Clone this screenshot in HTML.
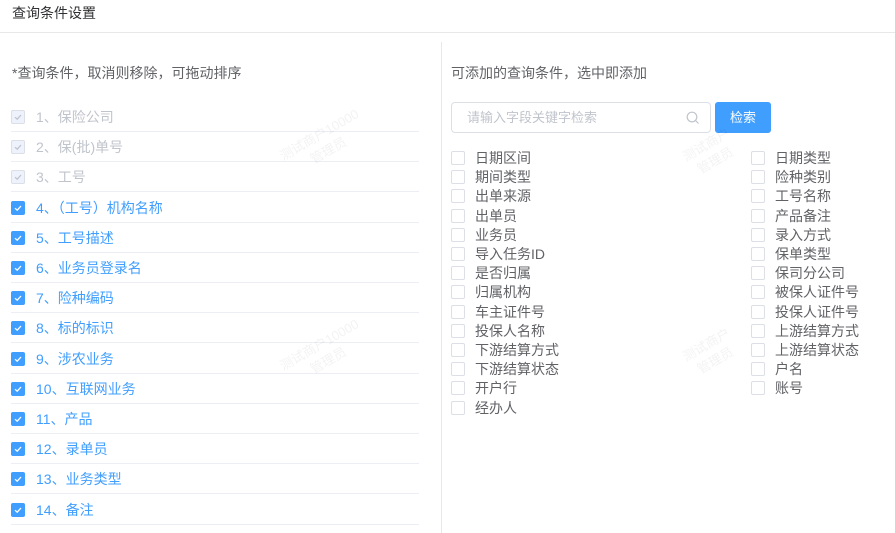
<!DOCTYPE html><html><head><meta charset="utf-8"><style>
body{margin:0;width:895px;height:533px;overflow:hidden;background:#fff;font-family:"Liberation Sans","Noto Sans CJK SC",sans-serif;position:relative}
.hd{position:absolute;left:12px;top:4px;font-size:14px;color:#303133;line-height:18px}
.hl{position:absolute;left:0;right:0;top:32px;border-top:1px solid #e8e8e8}
.vl{position:absolute;left:441px;top:42px;bottom:0;border-left:1px solid #e8e8e8}
.tip{position:absolute;font-size:14px;color:#606266;top:64px;line-height:18px}
.row{position:absolute;left:11px;width:408px;height:30px;border-bottom:1px solid #ebeef5;box-sizing:border-box;font-size:14px;line-height:30px}
.cb{position:absolute;width:14px;height:14px;border:1px solid #dcdfe6;border-radius:2px;box-sizing:border-box;background:#fff}
.row .cb{left:0;top:8px}
.row span{position:absolute;left:25px;top:0}
.dis{color:#c0c4cc}.dis .cb{background:#edf2fc}
.on{color:#409eff}.on .cb{background:#409eff;border-color:#409eff}
.cb svg{position:absolute;left:1px;top:1px}
.it{position:absolute;font-size:14px;color:#606266;line-height:19px}
.it .cb{left:0;top:2px}
.it span{position:absolute;left:24px;white-space:nowrap}
.inp{position:absolute;left:451px;top:102px;width:260px;height:31px;border:1px solid #dcdfe6;border-radius:4px;box-sizing:border-box;font-size:13px;color:#c0c4cc;line-height:29px;padding-left:15px}
.btn{position:absolute;left:715px;top:102px;width:56px;height:31px;background:#409eff;border-radius:3px;color:#fff;font-size:13px;text-align:center;line-height:31px}
.wm{position:absolute;color:rgba(0,0,0,0.05);font-size:13px;transform:rotate(-30deg);text-align:center;line-height:18px}
</style></head><body>
<div class="hd">查询条件设置</div><div class="hl"></div><div class="vl"></div>
<div class="tip" style="left:12px">*查询条件，取消则移除，可拖动排序</div>
<div class="tip" style="left:451px">可添加的查询条件，选中即添加</div>
<div id="L"></div>
<div class="inp">请输入字段关键字检索<svg style="position:absolute;right:10px;top:8px" width="14" height="14" viewBox="0 0 14 14"><circle cx="6" cy="6" r="4.8" fill="none" stroke="#c0c4cc" stroke-width="1.2"/><path d="M9.5 9.5L12.5 12.5" stroke="#c0c4cc" stroke-width="1.2"/></svg></div>
<div class="btn">检索</div>
<div id="R"></div>
<div class="wm" style="left:280px;top:125px">测试商户10000<br>管理员</div>
<div class="wm" style="left:280px;top:335px">测试商户10000<br>管理员</div>
<div class="wm" style="left:685px;top:135px">测试商户<br>管理员</div>
<div class="wm" style="left:685px;top:335px">测试商户<br>管理员</div>
<script>
var chk='<svg width="10" height="10" viewBox="0 0 10 10"><path d="M2 5.2L4.2 7.2L8 3" fill="none" stroke="COL" stroke-width="1.3"/></svg>';
var L=["保险公司","保(批)单号","工号","（工号）机构名称","工号描述","业务员登录名","险种编码","标的标识","涉农业务","互联网业务","产品","录单员","业务类型","备注"],h="";
L.forEach(function(t,i){var d=i<3;h+='<div class="row '+(d?'dis':'on')+'" style="top:'+(102+i*30.2)+'px"><div class="cb">'+chk.replace('COL',d?'#c0c4cc':'#fff')+'</div><span>'+(i+1)+'、'+t+'</span></div>';});
document.getElementById('L').innerHTML=h;
var A=["日期区间","期间类型","出单来源","出单员","业务员","导入任务ID","是否归属","归属机构","车主证件号","投保人名称","下游结算方式","下游结算状态","开户行","经办人"];
var B=["日期类型","险种类别","工号名称","产品备注","录入方式","保单类型","保司分公司","被保人证件号","投保人证件号","上游结算方式","上游结算状态","户名","账号"];
h="";
A.forEach(function(t,i){h+='<div class="it" style="left:451px;top:'+(149+i*19.2)+'px"><div class="cb"></div><span>'+t+'</span></div>';});
B.forEach(function(t,i){h+='<div class="it" style="left:751px;top:'+(149+i*19.2)+'px"><div class="cb"></div><span>'+t+'</span></div>';});
document.getElementById('R').innerHTML=h;
</script>
</body></html>
